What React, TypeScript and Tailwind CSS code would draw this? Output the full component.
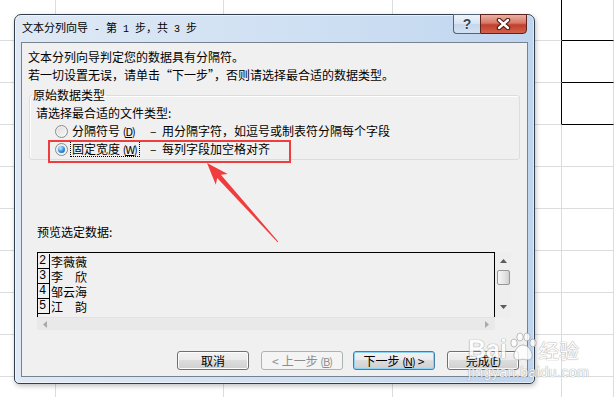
import clsx from "clsx";

const sheetRows = Array.from({ length: 10 }, (_, i) => i);
const sheetCols = [0, 1, 2, 3, 4];

const previewRows = [
  { n: "2", name: "李薇薇" },
  { n: "3", name: "李　欣" },
  { n: "4", name: "邹云海" },
  { n: "5", name: "江　韵" },
];

// access key like (D) — drawn tight so it reads like the old SimSun look
function Key({ k }: { k: string }) {
  return (
    <span className="text-[11px] tracking-[-1px]">
      (<span className="underline underline-offset-1">{k}</span>)
    </span>
  );
}

function Radio({ checked }: { checked?: boolean }) {
  return (
    <span className="flex h-[13px] w-[13px] shrink-0 items-center justify-center rounded-full border border-[#8b8b8b] bg-[linear-gradient(135deg,#d9d9d9,#fbfbfb)] shadow-[inset_0_0_0_1px_#f3f3f3]">
      {checked && (
        <span className="h-[7px] w-[7px] rounded-full bg-[radial-gradient(circle_at_35%_30%,#c9ecff,#2a8ce0_55%,#104d9c)]" />
      )}
    </span>
  );
}

function Sheet() {
  return (
    <div className="grid grid-cols-[56px_168px_169px_169px_1fr] grid-rows-[41px_repeat(9,42px)]">
      {sheetRows.map((r) =>
        sheetCols.map((c) => (
          <div
            key={`${r}-${c}`}
            className={clsx(
              "border-b border-r",
              r < 3 && c === 3 ? "border-r-black" : "border-r-[#dadcdd]",
              r < 3 && c === 4 ? "border-b-black" : "border-b-[#dadcdd]"
            )}
          />
        ))
      )}
    </div>
  );
}

function Dialog() {
  return (
    <div className="absolute left-[14px] top-[14px] flex h-[370px] w-[521px] flex-col rounded-t-[7px] rounded-b-[5px] border border-[#323e4c] bg-[linear-gradient(to_right,#dfe9f4,#cfe0f3_55%,#bfd5ee)] shadow-[inset_0_0_0_1px_rgba(255,255,255,0.55),1px_2px_5px_rgba(0,0,0,0.25)]">
      {/* title bar */}
      <div className="flex h-[27px] px-[7px]">
        <span className="self-center whitespace-pre text-[11px] leading-none text-black">
          文本分列向导<span className="font-['Liberation_Mono',monospace] text-[10px]"> - </span>第
          <span className="font-['Liberation_Mono',monospace] text-[10px]"> 1 </span>步，共
          <span className="font-['Liberation_Mono',monospace] text-[10px]"> 3 </span>步
        </span>
        <div className="-mt-px ml-auto flex h-[20px]">
          <div className="flex w-[27px] items-center justify-center rounded-bl-[4px] border border-r-0 border-[#536478] bg-[linear-gradient(#eef3f9,#d9e4f1_48%,#c5d6ea_52%,#d2e1f2)] font-['Liberation_Sans',sans-serif] text-[14px] font-bold leading-none text-[#33445a] [text-shadow:0_0_2px_#fff]">
            ?
          </div>
          <div className="flex w-[47px] items-center justify-center rounded-br-[4px] border border-[#5c221b] bg-[linear-gradient(#eab0a2,#d77766_45%,#c23e2a_55%,#d1634c)]">
            <svg width="15" height="12" viewBox="0 0 15 12">
              <path d="M3 2 L12 10 M12 2 L3 10" stroke="#4a1510" strokeWidth="4.5" strokeLinecap="round" />
              <path d="M3 2 L12 10 M12 2 L3 10" stroke="#fff" strokeWidth="2.4" strokeLinecap="round" />
            </svg>
          </div>
        </div>
      </div>

      {/* client area */}
      <div className="mx-[6px] mb-[6px] flex flex-1 flex-col border border-[#76828f] bg-[#f0f0f0] text-[12px] leading-[16px] text-black">
        <p className="ml-[6px] mt-[6px]">文本分列向导判定您的数据具有分隔符。</p>
        <p className="ml-[6px] mt-[2px]">若一切设置无误，请单击“下一步”，否则请选择最合适的数据类型。</p>

        <fieldset className="mx-[7px] mt-[4px] rounded-[3px] border border-[#d5dfe5] px-[6px] pb-[1px] pt-[2px] shadow-[inset_1px_1px_0_#fff]">
          <legend className="-ml-[4px] px-[1px]">原始数据类型</legend>
          <p>请选择最合适的文件类型:</p>
          <div className="mt-[1px] flex h-[18px] items-center whitespace-nowrap pl-[19px]">
            <Radio />
            <span className="ml-[2px] w-[70px] border border-transparent px-[1px] leading-[13px]">
              分隔符号 <Key k="D" />
            </span>
            <span className="ml-[10px] w-[12px]">–</span>
            <span>用分隔字符，如逗号或制表符分隔每个字段</span>
          </div>
          <div className="flex h-[18px] items-center whitespace-nowrap pl-[19px]">
            <Radio checked />
            <span className="ml-[2px] w-[70px] border border-dotted border-black px-[1px] leading-[13px]">
              固定宽度 <Key k="W" />
            </span>
            <span className="ml-[10px] w-[12px]">–</span>
            <span>每列字段加空格对齐</span>
          </div>
        </fieldset>

        <p className="ml-[15px] mt-[64px]">预览选定数据:</p>
        <div className="ml-[15px] mt-[12px] grid h-[78px] w-[474px] grid-cols-[458px_16px] grid-rows-[65px_13px]">
          <div className="overflow-hidden border-x border-t border-black pt-[1px]">
            {previewRows.map((r) => (
              <div key={r.n} className="flex h-[15px] items-center">
                <span className="flex h-full w-[12px] items-center border-b border-r border-black pl-[1px] font-['Liberation_Mono',monospace] text-[12px] leading-none">
                  {r.n}
                </span>
                <span className="ml-px whitespace-pre leading-none">{r.name}</span>
              </div>
            ))}
          </div>
          <div className="flex flex-col items-center bg-[#eeeeee] pl-px">
            <svg width="7" height="4" viewBox="0 0 7 4" className="mt-[7px]">
              <path d="M0 4 L3.5 0 L7 4Z" fill="#5a5a5a" />
            </svg>
            <div className="mt-[7px] h-[15px] w-[13px] rounded-[2px] border border-[#979797] bg-[linear-gradient(to_right,#f6f6f6,#e4e4e4_60%,#cfcfcf)]" />
            <svg width="7" height="4" viewBox="0 0 7 4" className="mt-[20px]">
              <path d="M0 0 L3.5 4 L7 0Z" fill="#5a5a5a" />
            </svg>
          </div>
          <div className="flex items-center justify-between border-t border-[#e2e2e2] bg-[#e9e9e9] px-[6px]">
            <svg width="4" height="7" viewBox="0 0 4 7">
              <path d="M4 0 L0 3.5 L4 7Z" fill="#a9a9a9" />
            </svg>
            <svg width="4" height="7" viewBox="0 0 4 7">
              <path d="M0 0 L4 3.5 L0 7Z" fill="#a9a9a9" />
            </svg>
          </div>
          <div className="bg-[#f0f0f0]" />
        </div>

        <div className="mt-[21px] flex justify-end pr-[8px] text-[12px] leading-none">
          <button className="flex h-[19px] w-[72px] items-center justify-center rounded-[3px] border border-[#707070] bg-[linear-gradient(#f2f2f2,#ebebeb_45%,#dddddd_50%,#cfcfcf)] shadow-[inset_0_0_0_1px_#fcfcfc]">
            取消
          </button>
          <button className="ml-[12px] flex h-[19px] w-[82px] items-center justify-center gap-[3px] rounded-[3px] border border-[#adb2b5] bg-[#f4f4f4] text-[#8d8d8d]">
            <span>&lt;</span>
            <span>
              上一步 <Key k="B" />
            </span>
          </button>
          <button className="ml-[10px] flex h-[19px] w-[82px] items-center justify-center gap-[3px] rounded-[3px] border border-[#3c7fb1] bg-[linear-gradient(#f2f2f2,#ebebeb_45%,#dddddd_50%,#cfcfcf)] shadow-[inset_0_0_0_1px_#8ed3f6]">
            <span>
              下一步 <Key k="N" />
            </span>
            <span>&gt;</span>
          </button>
          <button className="ml-[12px] flex h-[19px] w-[72px] items-center justify-center rounded-[3px] border border-[#707070] bg-[linear-gradient(#f2f2f2,#ebebeb_45%,#dddddd_50%,#cfcfcf)] shadow-[inset_0_0_0_1px_#fcfcfc]">
            完成 <Key k="F" />
          </button>
        </div>
      </div>
    </div>
  );
}

function Watermark() {
  return (
    <div className="pointer-events-none absolute left-[468px] top-[332px] flex flex-col text-white opacity-80 [text-shadow:0_0_1px_#8a8a8a,0_0_1px_#8a8a8a]">
      <div className="flex items-end">
        <span className="font-['Liberation_Sans',sans-serif] text-[25px] font-bold leading-none">Bai</span>
        <svg width="30" height="30" viewBox="0 0 30 30" className="mx-[1px]">
          <g fill="#fff" stroke="#9a9a9a" strokeWidth="0.8">
            <ellipse cx="6" cy="11" rx="3.2" ry="4" />
            <ellipse cx="12" cy="5" rx="3.2" ry="4" />
            <ellipse cx="19" cy="5" rx="3.2" ry="4" />
            <ellipse cx="25" cy="11" rx="3.2" ry="4" />
            <path d="M15 13 C9 13 5 21 6 25 C7 29 12 28 15 27 C18 28 23 29 24 25 C25 21 21 13 15 13Z" />
          </g>
        </svg>
        <span className="mb-[1px] text-[20px] leading-none">经验</span>
      </div>
      <span className="mt-[3px] font-['Liberation_Sans',sans-serif] text-[14px] leading-none tracking-[0.5px]">
        jingyan.baidu.com
      </span>
    </div>
  );
}

export default function App() {
  return (
    <div className="relative h-[397px] w-[614px] overflow-hidden bg-white font-['Noto_Sans_CJK_SC',sans-serif]">
      <Sheet />
      <Dialog />
      {/* annotation */}
      <div className="absolute left-[48px] top-[140px] h-[23px] w-[243px] border-2 border-[#ee3d3d]" />
      <svg className="pointer-events-none absolute left-0 top-0" width="614" height="397" viewBox="0 0 614 397">
        <polygon
          points="207,163 227.7,174 220.9,174.7 278.4,241.7 277.6,242.3 217.2,178.1 215.8,184.7"
          fill="#f03c3c"
        />
      </svg>
      <Watermark />
    </div>
  );
}
